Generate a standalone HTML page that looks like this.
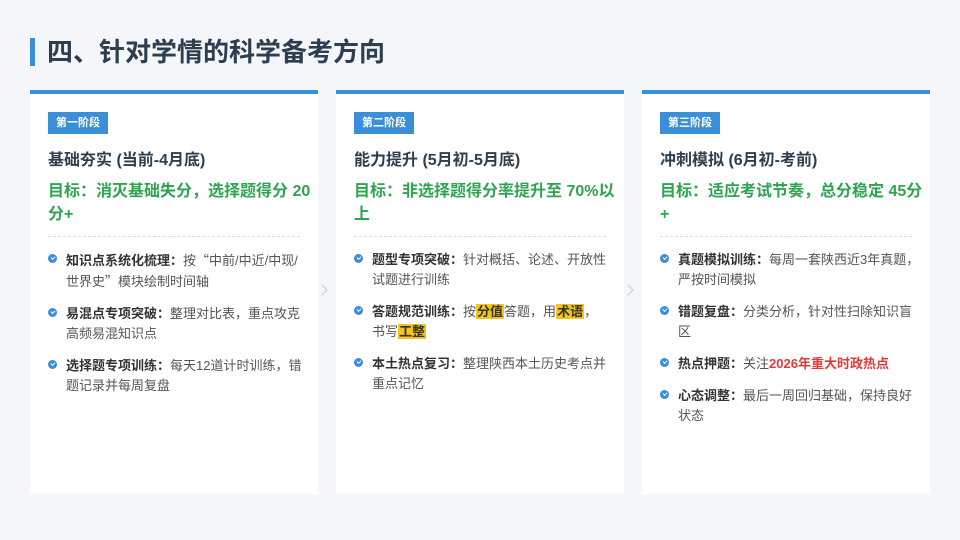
<!DOCTYPE html>
<html><head><meta charset="utf-8"><style>
*{margin:0;padding:0;box-sizing:border-box}
body{width:960px;height:540px;background:#f4f6f9;font-family:"Liberation Sans","Noto Sans CJK SC",sans-serif;position:relative;overflow:hidden;color:#333}
.title{position:absolute;left:30px;top:38px;height:28px;border-left:5px solid #3a8fd8;padding-left:12px;font-size:26px;font-weight:bold;color:#2c3e50;line-height:28px}
.card{position:absolute;top:90px;width:288px;height:404px;background:#fff;border-top:4px solid #3a8fd8}
.badge{position:absolute;left:18px;top:18px;width:60px;height:22px;background:#3a8fd8;color:#fff;font-size:11px;font-weight:bold;line-height:22px;text-align:center}
.ct{position:absolute;left:18px;top:55px;font-size:16px;font-weight:bold;color:#2c3e50;line-height:24px}
.goal{position:absolute;left:18px;right:4px;top:86px;font-size:16px;font-weight:bold;color:#2ea44f;line-height:23px}
.div{position:absolute;left:18px;right:18px;top:142px;border-bottom:1px dashed #d8dde3}
ul{position:absolute;left:18px;right:9px;top:156px;list-style:none}
li{position:relative;padding-left:18px;font-size:13px;line-height:20px;color:#555;margin-bottom:12px}
li b{color:#333}
li:before{content:"";position:absolute;left:0;top:4px;width:9px;height:9px;border-radius:50%;background:#3a8fd8}
li:after{content:"";position:absolute;left:2.5px;top:6px;width:3px;height:2px;border-left:1.3px solid #fff;border-bottom:1.3px solid #fff;transform:rotate(-45deg)}
.hl{background:#f5c518;color:#333;font-weight:bold;padding:0 1px}
.red{color:#e53935;font-weight:bold}
.q{font-family:"Noto Sans CJK SC",sans-serif}
.arr{position:absolute;top:286px;width:8px;height:8px;border-top:1.5px solid #c5cad0;border-right:1.5px solid #c5cad0;transform:rotate(45deg)}
</style></head><body>
<div class="title">四、针对学情的科学备考方向</div>

<div class="card" style="left:30px">
<div class="badge">第一阶段</div>
<div class="ct">基础夯实 (当前-4月底)</div>
<div class="goal">目标：消灭基础失分，选择题得分 20分+</div>
<div class="div"></div>
<ul>
<li><b>知识点系统化梳理：</b>按<span class="q">“</span>中前/中近/中现/世界史<span class="q">”</span>模块绘制时间轴</li>
<li><b>易混点专项突破：</b>整理对比表，重点攻克高频易混知识点</li>
<li><b>选择题专项训练：</b>每天12道计时训练，错题记录并每周复盘</li>
</ul></div>

<div class="arr" style="left:318px"></div>

<div class="card" style="left:336px">
<div class="badge">第二阶段</div>
<div class="ct">能力提升 (5月初-5月底)</div>
<div class="goal">目标：非选择题得分率提升至 70%以上</div>
<div class="div"></div>
<ul>
<li><b>题型专项突破：</b>针对概括、论述、开放性试题进行训练</li>
<li><b>答题规范训练：</b>按<span class="hl">分值</span>答题，用<span class="hl">术语</span>，<br>书写<span class="hl">工整</span></li>
<li><b>本土热点复习：</b>整理陕西本土历史考点并重点记忆</li>
</ul></div>

<div class="arr" style="left:624px"></div>

<div class="card" style="left:642px">
<div class="badge">第三阶段</div>
<div class="ct">冲刺模拟 (6月初-考前)</div>
<div class="goal">目标：适应考试节奏，总分稳定 45分+</div>
<div class="div"></div>
<ul>
<li><b>真题模拟训练：</b>每周一套陕西近3年真题，严按时间模拟</li>
<li><b>错题复盘：</b>分类分析，针对性扫除知识盲区</li>
<li><b>热点押题：</b>关注<span class="red">2026年重大时政热点</span></li>
<li><b>心态调整：</b>最后一周回归基础，保持良好状态</li>
</ul></div>
</body></html>
